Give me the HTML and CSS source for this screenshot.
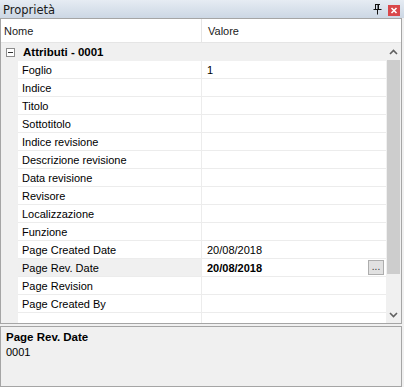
FILE: index.html
```html
<!DOCTYPE html>
<html lang="it">
<head>
    <meta charset="UTF-8">
    <title>Proprietà</title>
    <link rel="stylesheet" href="styles.css">
</head>
<body>
    <div class="window">
        <div class="titlebar">
            <span class="title">Proprietà</span>
            <span class="pin">
                <svg width="9" height="11" viewBox="0 0 9 11">
                    <path d="M2 0.5h5M2.5 0.5v5M5.5 0.5v5M0.5 5.5h8M4.5 5.5v5" stroke="#111" stroke-width="1" fill="none"/>
                    <path d="M5 1v4" stroke="#111" stroke-width="1"/>
                </svg>
            </span>
            <span class="close">
                <svg width="12" height="11" viewBox="0 0 12 11">
                    <path d="M3.5 3l5 5M8.5 3l-5 5" stroke="#fff" stroke-width="1.6"/>
                </svg>
            </span>
        </div>

        <div class="grid">
            <div class="grid-head">
                <div class="head-cell head-name">Nome</div>
                <div class="head-cell head-value">Valore</div>
            </div>
            <div class="grid-body">
                <div class="rows">
                    <div class="category">
                        <span class="toggle">
                            <svg width="9" height="9" viewBox="0 0 9 9">
                                <rect x="0.5" y="0.5" width="8" height="8" fill="#fff" stroke="#8c8c8c"/>
                                <path d="M2 4.5h5" stroke="#333"/>
                            </svg>
                        </span>
                        <span class="cat-label">Attributi - 0001</span>
                    </div>
                    <div class="row"><div class="name">Foglio</div><div class="value">1</div></div>
                    <div class="row"><div class="name">Indice</div><div class="value"></div></div>
                    <div class="row"><div class="name">Titolo</div><div class="value"></div></div>
                    <div class="row"><div class="name">Sottotitolo</div><div class="value"></div></div>
                    <div class="row"><div class="name">Indice revisione</div><div class="value"></div></div>
                    <div class="row"><div class="name">Descrizione revisione</div><div class="value"></div></div>
                    <div class="row"><div class="name">Data revisione</div><div class="value"></div></div>
                    <div class="row"><div class="name">Revisore</div><div class="value"></div></div>
                    <div class="row"><div class="name">Localizzazione</div><div class="value"></div></div>
                    <div class="row"><div class="name">Funzione</div><div class="value"></div></div>
                    <div class="row"><div class="name">Page Created Date</div><div class="value">20/08/2018</div></div>
                    <div class="row selected">
                        <div class="name">Page Rev. Date</div>
                        <div class="value"><b>20/08/2018</b><span class="dots">...</span></div>
                    </div>
                    <div class="row"><div class="name">Page Revision</div><div class="value"></div></div>
                    <div class="row"><div class="name">Page Created By</div><div class="value"></div></div>
                    <div class="row last"><div class="name"></div><div class="value"></div></div>
                </div>
                <div class="scrollbar">
                    <div class="arrow">
                        <svg width="9" height="6" viewBox="0 0 9 6"><path d="M1 5l3.5-3.5L8 5" stroke="#606060" stroke-width="1.6" fill="none"/></svg>
                    </div>
                    <div class="track">
                        <div class="thumb"></div>
                    </div>
                    <div class="arrow">
                        <svg width="9" height="6" viewBox="0 0 9 6"><path d="M1 1l3.5 3.5L8 1" stroke="#606060" stroke-width="1.6" fill="none"/></svg>
                    </div>
                </div>
            </div>
        </div>

        <div class="description">
            <div class="desc-title">Page Rev. Date</div>
            <div class="desc-text">0001</div>
        </div>
    </div>
</body>
</html>
```

FILE: styles.css
```css
* {
    margin: 0;
    padding: 0;
    box-sizing: border-box;
}

body {
    font-family: "Liberation Sans", Arial, sans-serif;
    font-size: 11px;
    color: #000;
    background-color: #f0f0f0;
}

.window {
    width: 404px;
    height: 387px;
    display: flex;
    flex-direction: column;
    background-color: #f0f0f0;
}

.titlebar {
    height: 18px;
    display: flex;
    align-items: center;
    padding: 0 4px 0 3px;
    background: linear-gradient(#e6ecf3, #ccd7e4);
}

.title {
    flex: 1;
    font-family: "DejaVu Sans", sans-serif;
    font-size: 11.5px;
    color: #1a1a1a;
    padding-top: 1px;
}

.pin {
    display: flex;
    margin-right: 6px;
    margin-top: 1px;
}

.close {
    display: flex;
    width: 12px;
    height: 11px;
    margin-top: 2px;
    background-color: #d9474a;
}

.grid {
    width: 402px;
    height: 306px;
    border: 1px solid #a5a5a5;
    background-color: #fff;
    display: flex;
    flex-direction: column;
}

.grid-head {
    height: 24px;
    display: flex;
    border-bottom: 1px solid #e5e5e5;
}

.head-cell {
    flex: 1;
    display: flex;
    align-items: center;
    padding-left: 3px;
    color: #1a1a1a;
}

.head-name {
    flex: 0 0 201px;
    border-right: 1px solid #e5e5e5;
}

.head-value {
    padding-left: 6px;
}

.grid-body {
    flex: 1;
    display: flex;
    overflow: hidden;
}

.rows {
    flex: 1;
    background-color: #f0f0f0;
}

.category {
    height: 18px;
    display: flex;
    align-items: center;
    font-weight: bold;
    font-size: 11.5px;
}

.toggle {
    display: flex;
    width: 17px;
    justify-content: center;
    margin-left: 1px;
}

.cat-label {
    padding-left: 4px;
}

.row {
    height: 18px;
    margin-left: 17px;
    display: flex;
    background-color: #fff;
    border-bottom: 1px solid #ececec;
}

.name {
    flex: 0 0 184px;
    padding-left: 4px;
    border-right: 1px solid #ececec;
    display: flex;
    align-items: center;
}

.value {
    flex: 1;
    padding-left: 5px;
    display: flex;
    align-items: center;
}

.selected .name {
    background-color: #f0f0f0;
}

.dots {
    margin-left: auto;
    margin-right: 2px;
    width: 16px;
    height: 15px;
    border: 1px solid #adadad;
    background-color: #e1e1e1;
    font-size: 10px;
    color: #333;
    display: flex;
    justify-content: center;
    align-items: flex-end;
    padding-bottom: 2px;
}

.row.last {
    height: 11px;
    border-bottom: none;
}

.scrollbar {
    width: 15px;
    display: flex;
    flex-direction: column;
    background-color: #f0f0f0;
}

.arrow {
    height: 17px;
    display: flex;
    justify-content: center;
    align-items: center;
}

.track {
    flex: 1;
}

.thumb {
    margin: 0 1px;
    height: 214px;
    background-color: #cdcdcd;
}

.description {
    margin-top: 2px;
    width: 402px;
    height: 61px;
    border: 1px solid #a5a5a5;
    padding: 4px 5px;
}

.desc-title {
    font-weight: bold;
    font-size: 11.5px;
    margin-bottom: 3px;
}
```
